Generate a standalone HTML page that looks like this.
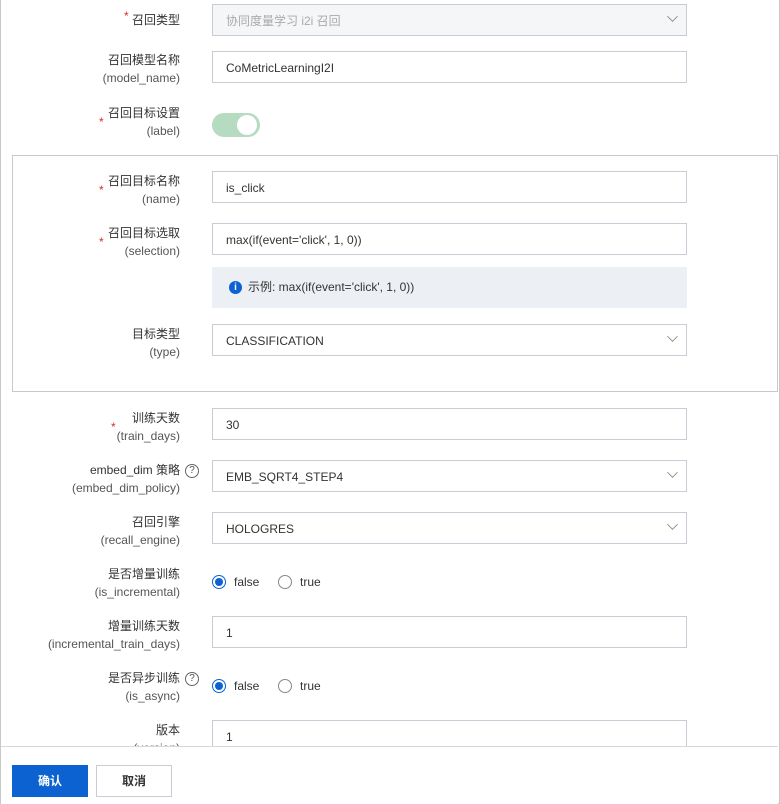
<!DOCTYPE html>
<html><head><meta charset="utf-8"><style>
*{box-sizing:border-box;margin:0;padding:0}
body{width:780px;height:804px;background:#fff;position:relative;overflow:hidden;font-family:"Liberation Sans","Noto Sans CJK SC",sans-serif;font-size:12px;color:#333}
.frame{position:absolute;left:0;top:-1px;width:780px;height:805px;border:1px solid #c9c9c9}
.lb{position:absolute;right:600px;text-align:right;line-height:18px;color:#333;white-space:nowrap}
.lb .en{color:#555}
.star{position:absolute;color:#d93026;font-size:12px}
.in{position:absolute;left:212px;width:475px;height:32px;border:1px solid #c8ccd4;background:#fff;padding-left:13px;padding-top:1px;line-height:30px;color:#333;font-size:12px}
.in.dis{background:#f5f6f8;color:#aaa}
.chev{position:absolute;right:9px;width:9px;height:9px;border-right:1.4px solid #888;border-bottom:1.4px solid #888;transform:rotate(45deg) scale(.85);top:7px}
.radio{position:absolute;top:0;width:14px;height:14px;border-radius:50%;border:1px solid #888;background:#fff}
.radio.on{border-color:#0b62d0}
.radio.on:after{content:"";position:absolute;left:2px;top:2px;width:8px;height:8px;border-radius:50%;background:#0b62d0}
.rt{position:absolute;top:0px;color:#333}
.q{position:absolute;width:14px;height:14px;border:1px solid #666;border-radius:50%;font-size:10px;line-height:12px;text-align:center;color:#555}
</style></head><body>
<div class="frame"></div>

<span class="star" style="left:124px;top:9px">*</span>
<div class="lb" style="top:11px">召回类型</div>
<div class="in dis" style="top:4px">协同度量学习 i2i 召回<span class="chev"></span></div>

<div class="lb" style="top:51px">召回模型名称<br><span class="en">(model_name)</span></div>
<div class="in" style="top:51px">CoMetricLearningI2I</div>

<span class="star" style="left:99px;top:115px">*</span>
<div class="lb" style="top:104px">召回目标设置<br><span class="en">(label)</span></div>
<div style="position:absolute;left:212px;top:113px;width:48px;height:24px;border-radius:12px;background:#b5dcc1"><div style="position:absolute;right:3px;top:2px;width:20px;height:20px;border-radius:50%;background:#fff"></div></div>

<div style="position:absolute;left:12px;top:155px;width:766px;height:237px;border:1px solid #c9c9c9"></div>

<span class="star" style="left:99px;top:183px">*</span>
<div class="lb" style="top:172px">召回目标名称<br><span class="en">(name)</span></div>
<div class="in" style="top:171px">is_click</div>

<span class="star" style="left:99px;top:235px">*</span>
<div class="lb" style="top:224px">召回目标选取<br><span class="en">(selection)</span></div>
<div class="in" style="top:223px">max(if(event='click', 1, 0))</div>

<div style="position:absolute;left:212px;top:267px;width:475px;height:41px;background:#eceff4;line-height:41px;padding-left:36px;color:#333">示例: max(if(event='click', 1, 0))
<span style="position:absolute;left:17px;top:14px;width:13px;height:13px;border-radius:50%;background:#0b62d0;color:#fff;font-size:10px;font-weight:bold;line-height:13px;text-align:center">i</span></div>

<div class="lb" style="top:325px">目标类型<br><span class="en">(type)</span></div>
<div class="in" style="top:324px">CLASSIFICATION<span class="chev"></span></div>

<span class="star" style="left:111px;top:420px">*</span>
<div class="lb" style="top:409px">训练天数<br><span class="en">(train_days)</span></div>
<div class="in" style="top:408px">30</div>

<div class="lb" style="top:461px">embed_dim 策略<br><span class="en">(embed_dim_policy)</span></div>
<span class="q" style="left:185px;top:464px">?</span>
<div class="in" style="top:460px">EMB_SQRT4_STEP4<span class="chev"></span></div>

<div class="lb" style="top:513px">召回引擎<br><span class="en">(recall_engine)</span></div>
<div class="in" style="top:512px">HOLOGRES<span class="chev"></span></div>

<div class="lb" style="top:565px">是否增量训练<br><span class="en">(is_incremental)</span></div>
<div style="position:absolute;left:212px;top:575px;width:200px;height:16px">
<span class="radio on" style="left:0"></span><span class="rt" style="left:22px">false</span>
<span class="radio" style="left:66px"></span><span class="rt" style="left:88px">true</span></div>

<div class="lb" style="top:617px">增量训练天数<br><span class="en">(incremental_train_days)</span></div>
<div class="in" style="top:616px">1</div>

<div class="lb" style="top:669px">是否异步训练<br><span class="en">(is_async)</span></div>
<span class="q" style="left:185px;top:672px">?</span>
<div style="position:absolute;left:212px;top:679px;width:200px;height:16px">
<span class="radio on" style="left:0"></span><span class="rt" style="left:22px">false</span>
<span class="radio" style="left:66px"></span><span class="rt" style="left:88px">true</span></div>

<div class="lb" style="top:721px">版本<br><span class="en">(version)</span></div>
<div class="in" style="top:720px">1</div>

<div style="position:absolute;left:1px;top:746px;width:777px;height:58px;background:#fff;border-top:1px solid #d8d8d8">
<div style="position:absolute;left:11px;top:18px;width:76px;height:32px;background:#0b62d0;color:#fff;font-weight:bold;text-align:center;line-height:32px">确认</div>
<div style="position:absolute;left:95px;top:18px;width:76px;height:32px;border:1px solid #c8ccd4;color:#333;font-weight:bold;text-align:center;line-height:30px">取消</div>
</div>
</body></html>
